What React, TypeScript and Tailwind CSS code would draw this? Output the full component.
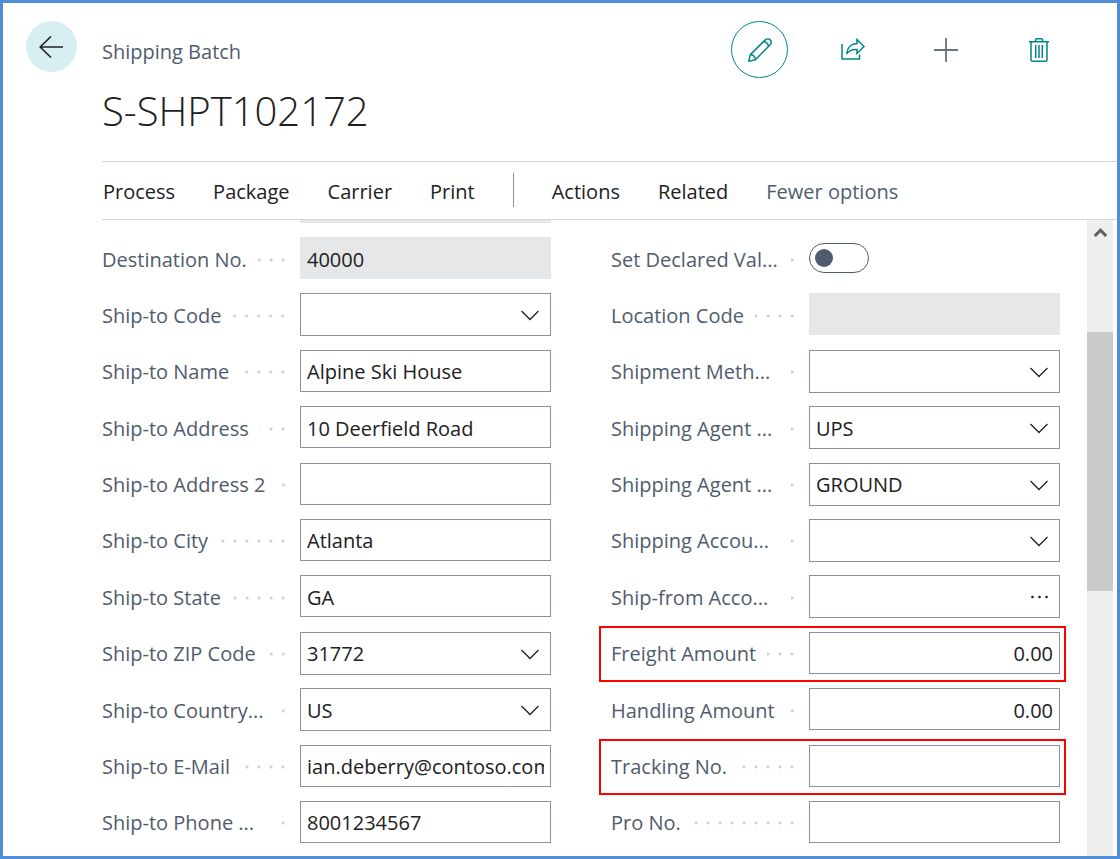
import type { ReactNode } from "react";

type FieldKind = "text" | "select" | "lookup" | "readonly" | "switch" | "number";

interface Field {
  id: string;
  label: string;
  kind: FieldKind;
  value?: string;
  highlighted?: boolean;
}

const shipTo: Field[] = [
  { id: "destination-no", label: "Destination No.", kind: "readonly", value: "40000" },
  { id: "ship-to-code", label: "Ship-to Code", kind: "select" },
  { id: "ship-to-name", label: "Ship-to Name", kind: "text", value: "Alpine Ski House" },
  { id: "ship-to-address", label: "Ship-to Address", kind: "text", value: "10 Deerfield Road" },
  { id: "ship-to-address-2", label: "Ship-to Address 2", kind: "text" },
  { id: "ship-to-city", label: "Ship-to City", kind: "text", value: "Atlanta" },
  { id: "ship-to-state", label: "Ship-to State", kind: "text", value: "GA" },
  { id: "ship-to-zip", label: "Ship-to ZIP Code", kind: "select", value: "31772" },
  { id: "ship-to-country", label: "Ship-to Country...", kind: "select", value: "US" },
  { id: "ship-to-email", label: "Ship-to E-Mail", kind: "text", value: "ian.deberry@contoso.com" },
  { id: "ship-to-phone", label: "Ship-to Phone ...", kind: "text", value: "8001234567" },
];

const shipment: Field[] = [
  { id: "declared-value", label: "Set Declared Val...", kind: "switch" },
  { id: "location-code", label: "Location Code", kind: "readonly" },
  { id: "shipment-method", label: "Shipment Meth...", kind: "select" },
  { id: "agent", label: "Shipping Agent ...", kind: "select", value: "UPS" },
  { id: "agent-service", label: "Shipping Agent ...", kind: "select", value: "GROUND" },
  { id: "shipping-account", label: "Shipping Accou...", kind: "select" },
  { id: "ship-from-account", label: "Ship-from Acco...", kind: "lookup" },
  { id: "freight-amount", label: "Freight Amount", kind: "number", value: "0.00", highlighted: true },
  { id: "handling-amount", label: "Handling Amount", kind: "number", value: "0.00" },
  { id: "tracking-no", label: "Tracking No.", kind: "text", highlighted: true },
  { id: "pro-no", label: "Pro No.", kind: "text" },
];

const box =
  "w-full min-w-0 rounded-none border border-[#8b919e] bg-white px-1.5 pt-0.5 text-xl text-[#212121] outline-none";

function Control({ field }: { field: Field }) {
  const { id, kind, value = "" } = field;
  if (kind === "switch") {
    return (
      <span className="relative flex h-[30px] w-[60px] self-center">
        <input
          id={id}
          type="checkbox"
          role="switch"
          className="peer h-full w-full cursor-pointer appearance-none rounded-full border border-[#505c6d] bg-white"
        />
        <span className="pointer-events-none absolute top-1.5 left-1.5 size-[18px] rounded-full bg-[#505c6d] peer-checked:left-9" />
      </span>
    );
  }
  if (kind === "readonly") {
    return (
      <input
        id={id}
        readOnly
        defaultValue={value}
        className="h-[42px] w-full min-w-0 bg-[#e6e7e9] px-[7px] pt-0.5 text-xl text-[#212121] outline-none"
      />
    );
  }
  if (kind === "select") {
    return (
      <span className="relative flex w-full">
        <select id={id} defaultValue={value} className={`${box} h-[43px] appearance-none`}>
          <option value={value}>{value}</option>
        </select>
        <svg
          className="pointer-events-none absolute top-[17px] right-3 h-[11px] w-[18px]"
          viewBox="0 0 18 11"
          fill="none"
          stroke="#212121"
          strokeWidth="1.3"
        >
          <path d="M.5 1 9 9.500 17.500 1" />
        </svg>
      </span>
    );
  }
  if (kind === "lookup") {
    return (
      <span className="relative flex w-full">
        <input id={id} defaultValue={value} className={`${box} h-[43px] pr-10`} />
        <button
          type="button"
          aria-label="Look up account"
          className="absolute inset-y-0 right-0 flex w-10 items-center justify-center"
        >
          <svg className="h-1 w-[18px]" viewBox="0 0 18 4" fill="#212121">
            <circle cx="1.500" cy="2" r="1.300" />
            <circle cx="8.500" cy="2" r="1.300" />
            <circle cx="15.500" cy="2" r="1.300" />
          </svg>
        </button>
      </span>
    );
  }
  return (
    <input
      id={id}
      defaultValue={value}
      className={kind === "number" ? `${box} h-[42px] text-right` : `${box} h-[42px]`}
    />
  );
}

function FieldRow({ field }: { field: Field }) {
  const shortened = field.label.endsWith("...");
  return (
    <div className="relative flex h-[42px] items-center">
      {field.highlighted && (
        <span className="pointer-events-none absolute -top-1.5 -right-1.5 -bottom-2 -left-3 border-2 border-[#ff0000]" />
      )}
      <div className="flex w-[198px] shrink-0 items-center pt-[3px] pr-[11px]">
        <label
          htmlFor={field.id}
          className={`text-xl whitespace-nowrap text-[#505c6d] ${shortened ? "min-w-[169px]" : ""}`}
        >
          {field.label}
        </label>
        <span className="ml-[11px] h-3 flex-1 bg-[radial-gradient(circle,#cdd0d5_1px,transparent_2px)] bg-[length:12px_12px] bg-right bg-repeat-x" />
      </div>
      <div className="flex h-[42px] min-w-0 flex-1 items-start">
        <Control field={field} />
      </div>
    </div>
  );
}

function FieldColumn({ fields, children }: { fields: Field[]; children?: ReactNode }) {
  return (
    <div className="flex min-w-0 flex-col">
      <div className="flex h-[17px] pl-[198px]">{children}</div>
      <div className="flex flex-1 flex-col justify-between gap-3.5">
        {fields.map((f) => (
          <FieldRow key={f.id} field={f} />
        ))}
      </div>
    </div>
  );
}

function PencilIcon() {
  return (
    <svg className="size-6" viewBox="0 0 24 24" fill="none" stroke="#00848a" strokeWidth="1.500" strokeLinejoin="round">
      <path d="M.8 23.200 2.300 16.600 17.300 1.900a3.400 3.400 0 0 1 4.900 4.900L7.400 21.700Z" />
      <path d="M2.300 16.600c2.700.2 4.800 2.300 5.100 5.100M15.600 3.500c2.600.3 4.500 2.300 4.900 4.900" />
    </svg>
  );
}

function ShareIcon() {
  return (
    <svg className="size-6" viewBox="0 0 24 24" fill="none" stroke="#00848a" strokeWidth="1.500">
      <path d="M1 6v15h17.500v-4.500" />
      <path d="M16 1.500 23 8.500l-7 7V11.500c-4.500-.3-8 .8-10.300 4.300C6.200 10 9.800 5.700 16 5.500Z" />
    </svg>
  );
}

function PlusIcon() {
  return (
    <svg className="size-6" viewBox="0 0 24 24" fill="none" stroke="#69737f" strokeWidth="1.800">
      <path d="M12 0v24M0 12h24" />
    </svg>
  );
}

function TrashIcon() {
  return (
    <svg className="size-6" viewBox="0 0 24 24" fill="none" stroke="#00848a" strokeWidth="1.500">
      <path d="M2 3.700h20M8.500 3.500V1.800q0-1 1-1h5q1 0 1 1v1.700M4 4v17.700q0 1.500 1.500 1.500h13q1.500 0 1.500-1.500V4" />
      <path d="M8.700 7v13M12 7v13M15.300 7v13" />
    </svg>
  );
}

function ActionButton({ label, children }: { label: string; children: ReactNode }) {
  return (
    <button type="button" aria-label={label} className="flex size-[57px] items-center justify-center">
      {children}
    </button>
  );
}

export default function App() {
  return (
    <div className="flex min-h-screen flex-col border-[3px] border-[#538dd5] bg-white font-['Open_Sans','Noto_Sans',sans-serif] text-[#212121]">
      <header className="flex gap-[25px] pt-[18px] pr-[50px] pl-[23px]">
        <button
          type="button"
          aria-label="Back"
          className="flex size-[51px] shrink-0 items-center justify-center rounded-full bg-[#d8eff1] pr-0.5"
        >
          <svg className="h-[22px] w-6" viewBox="0 0 24 22" fill="none" stroke="#212121" strokeWidth="1.600">
            <path d="M24 11H1M12 .5 1.200 11 12 21.500" />
          </svg>
        </button>
        <div className="flex-1">
          <p className="mt-[17px] text-xl leading-7 text-[#505c6d]">Shipping Batch</p>
          <h1 className="mt-[15px] mb-5 text-[40px] leading-[60px] font-light">S-SHPT102172</h1>
        </div>
        <div className="flex gap-9">
          <button
            type="button"
            aria-label="Edit"
            className="flex size-[57px] items-center justify-center rounded-full border border-[#00848a]"
          >
            <PencilIcon />
          </button>
          <ActionButton label="Share">
            <ShareIcon />
          </ActionButton>
          <ActionButton label="New">
            <PlusIcon />
          </ActionButton>
          <ActionButton label="Delete">
            <TrashIcon />
          </ActionButton>
        </div>
      </header>

      <nav className="ml-[99px] flex h-[59px] items-center gap-[38px] border-y border-[#d2d5da] pl-px text-xl whitespace-nowrap">
        <button type="button" className="pt-0.5">Process</button>
        <button type="button" className="pt-0.5">Package</button>
        <button type="button" className="pt-0.5">Carrier</button>
        <button type="button" className="pt-0.5">Print</button>
        <span className="mb-0.5 h-[34px] w-px bg-[#8b919e]" />
        <button type="button" className="pt-0.5">Actions</button>
        <button type="button" className="pt-0.5">Related</button>
        <button type="button" className="pt-0.5 text-[#505c6d]">
          Fewer options
        </button>
      </nav>

      <main className="flex flex-1 pr-1 pl-[99px]">
        <div className="grid min-w-0 flex-1 grid-cols-2 gap-[60px] pr-[27px] pb-[13px]">
          <FieldColumn fields={shipTo}>
            <div className="h-[3px] w-full bg-[#e6e7e9]" />
          </FieldColumn>
          <FieldColumn fields={shipment} />
        </div>
        <div className="flex w-[26px] flex-col items-center bg-[#efefef]">
          <svg className="mt-2 h-[9px] w-[13px] shrink-0" viewBox="0 0 13 9" fill="none" stroke="#606060" strokeWidth="3">
            <path d="M.8 8 6.500 2.200 12.200 8" />
          </svg>
          <div className="mt-[95px] h-[259px] w-full bg-[#cbcbcb]" />
        </div>
      </main>
    </div>
  );
}
